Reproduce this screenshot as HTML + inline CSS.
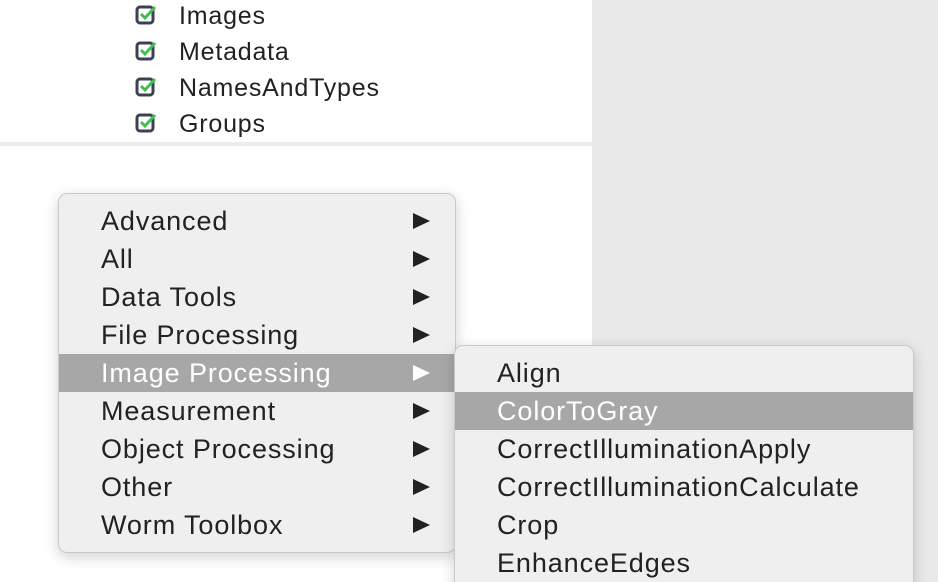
<!DOCTYPE html>
<html><head><style>
html,body{margin:0;width:938px;height:582px;overflow:hidden;}
body{position:relative;background:#e9e9e9;font-family:"Liberation Sans",sans-serif;}
.left{position:absolute;left:0;top:0;width:592px;height:582px;background:#fff;}
.div{position:absolute;left:0;top:142px;width:592px;height:4px;background:#ececec;}
.tree{position:absolute;left:135px;font-size:25px;letter-spacing:0.8px;color:#222;}
.tree svg{position:absolute;left:0;top:1px}
.tree span{position:absolute;left:44px;top:0;white-space:nowrap}
.menu{position:absolute;background:#efefef;border:1px solid #c9c9c9;border-radius:9px;box-shadow:0 4px 14px rgba(0,0,0,.18);}
.it{position:absolute;left:0;right:0;height:38px;font-size:27px;letter-spacing:0.9px;color:#222;line-height:38px;white-space:nowrap}
.it.sel{background:#a7a7a7;color:#fff}
.arr{position:absolute;left:354px;top:11px;width:0;height:0;border-left:17px solid #222;border-top:8px solid transparent;border-bottom:8px solid transparent}
.sel .arr{border-left-color:#fff}
</style></head><body>
<div class="left"></div>
<div class="div"></div>
<div class="tree" style="top:2px"><svg width="24" height="24" viewBox="0 0 24 24"><rect x="2" y="4" width="16" height="16" rx="3" fill="none" stroke="#3a4150" stroke-width="3"/><path d="M6 11l4 4 10-11" fill="none" stroke="#3fbf4f" stroke-width="3"/></svg><span>Images</span></div>
<div class="tree" style="top:38px"><svg width="24" height="24" viewBox="0 0 24 24"><rect x="2" y="4" width="16" height="16" rx="3" fill="none" stroke="#3a4150" stroke-width="3"/><path d="M6 11l4 4 10-11" fill="none" stroke="#3fbf4f" stroke-width="3"/></svg><span>Metadata</span></div>
<div class="tree" style="top:74px"><svg width="24" height="24" viewBox="0 0 24 24"><rect x="2" y="4" width="16" height="16" rx="3" fill="none" stroke="#3a4150" stroke-width="3"/><path d="M6 11l4 4 10-11" fill="none" stroke="#3fbf4f" stroke-width="3"/></svg><span>NamesAndTypes</span></div>
<div class="tree" style="top:110px"><svg width="24" height="24" viewBox="0 0 24 24"><rect x="2" y="4" width="16" height="16" rx="3" fill="none" stroke="#3a4150" stroke-width="3"/><path d="M6 11l4 4 10-11" fill="none" stroke="#3fbf4f" stroke-width="3"/></svg><span>Groups</span></div>

<div class="menu" style="left:58px;top:193px;width:396px;height:358px">
<div class="it" style="top:8px"><span style="margin-left:42px">Advanced</span><i class="arr"></i></div>
<div class="it" style="top:46px"><span style="margin-left:42px">All</span><i class="arr"></i></div>
<div class="it" style="top:84px"><span style="margin-left:42px">Data Tools</span><i class="arr"></i></div>
<div class="it" style="top:122px"><span style="margin-left:42px">File Processing</span><i class="arr"></i></div>
<div class="it sel" style="top:160px"><span style="margin-left:42px">Image Processing</span><i class="arr"></i></div>
<div class="it" style="top:198px"><span style="margin-left:42px">Measurement</span><i class="arr"></i></div>
<div class="it" style="top:236px"><span style="margin-left:42px">Object Processing</span><i class="arr"></i></div>
<div class="it" style="top:274px"><span style="margin-left:42px">Other</span><i class="arr"></i></div>
<div class="it" style="top:312px"><span style="margin-left:42px">Worm Toolbox</span><i class="arr"></i></div>
</div>
<div class="menu" style="left:454px;top:345px;width:458px;height:260px">
<div class="it" style="top:8px"><span style="margin-left:42px">Align</span></div>
<div class="it sel" style="top:46px"><span style="margin-left:42px">ColorToGray</span></div>
<div class="it" style="top:84px"><span style="margin-left:42px">CorrectIlluminationApply</span></div>
<div class="it" style="top:122px"><span style="margin-left:42px">CorrectIlluminationCalculate</span></div>
<div class="it" style="top:160px"><span style="margin-left:42px">Crop</span></div>
<div class="it" style="top:198px"><span style="margin-left:42px">EnhanceEdges</span></div>
</div>
</body></html>
